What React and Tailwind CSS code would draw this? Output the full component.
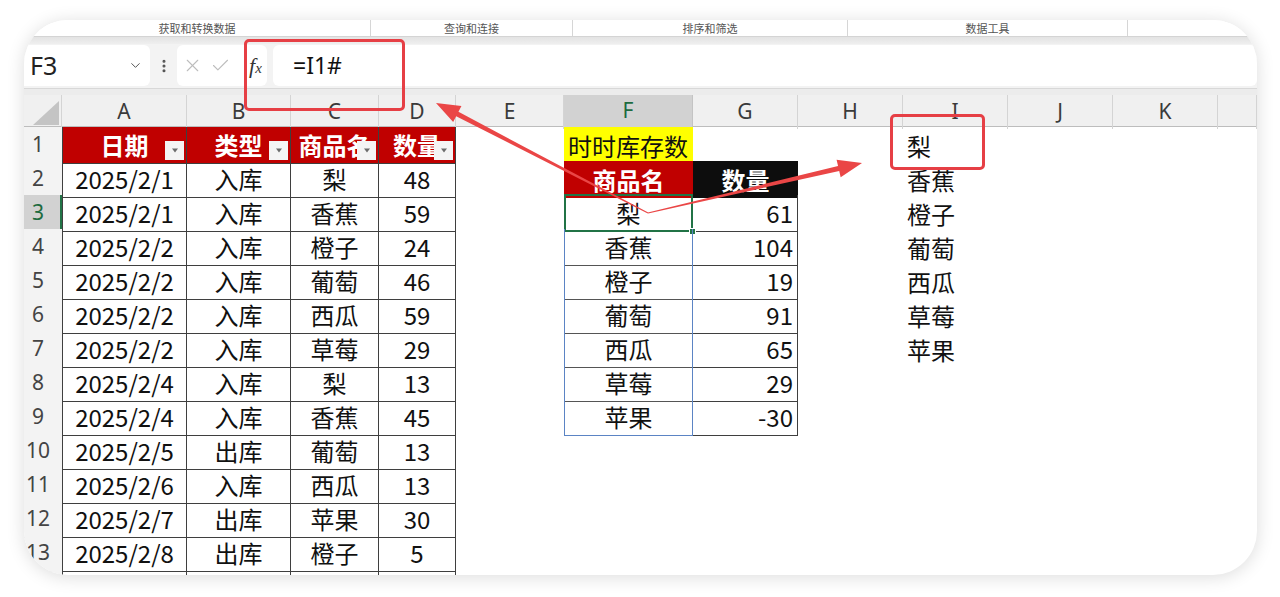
import { ChevronDown, EllipsisVertical, X, Check } from "lucide-react";

const cols = ["A", "B", "C", "D", "E", "F", "G", "H", "I", "J", "K", ""];

const gridCols =
  "grid grid-cols-[38px_125px_104px_88px_77px_108px_129px_105px_105px_105px_105px_105px_1fr]";

const head = ["日期", "类型", "商品名", "数量"];

const records = [
  ["2025/2/1", "入库", "梨", "48"],
  ["2025/2/1", "入库", "香蕉", "59"],
  ["2025/2/2", "入库", "橙子", "24"],
  ["2025/2/2", "入库", "葡萄", "46"],
  ["2025/2/2", "入库", "西瓜", "59"],
  ["2025/2/2", "入库", "草莓", "29"],
  ["2025/2/4", "入库", "梨", "13"],
  ["2025/2/4", "入库", "香蕉", "45"],
  ["2025/2/5", "出库", "葡萄", "13"],
  ["2025/2/6", "入库", "西瓜", "13"],
  ["2025/2/7", "出库", "苹果", "30"],
  ["2025/2/8", "出库", "橙子", "5"],
  ["", "", "", ""],
];

const stock = [
  ["梨", "61"],
  ["香蕉", "104"],
  ["橙子", "19"],
  ["葡萄", "91"],
  ["西瓜", "65"],
  ["草莓", "29"],
  ["苹果", "-30"],
];

const fruits = ["梨", "香蕉", "橙子", "葡萄", "西瓜", "草莓", "苹果"];

const ribbon = [
  { label: "获取和转换数据", w: "w-[347px]" },
  { label: "查询和连接", w: "w-[202px]" },
  { label: "排序和筛选", w: "w-[275px]" },
  { label: "数据工具", w: "w-[280px]" },
];

function FilterBtn() {
  return (
    <span className="absolute right-[2px] bottom-[3px] w-[19px] h-[19px] bg-[#f4f4f4] flex items-center justify-center">
      <svg width="8" height="5" viewBox="0 0 8 5">
        <polygon points="1,0.5 7,0.5 4,4.5" fill="#6b6b6b" />
      </svg>
    </span>
  );
}

function RowHead({ r }) {
  if (r === 3)
    return (
      <div className="flex items-center justify-center pr-[8px] bg-[#d2d2d2] text-[#1d6b3f] border-b border-b-[#c8c8c8] border-r-2 border-r-[#217346]">
        {r}
      </div>
    );
  // the last row only peeks out under the card edge, its number is hidden
  return (
    <div className="flex items-center justify-center pr-[10px] bg-[#f3f3f3] text-[#444] border-b border-b-[#dcdcdc]">
      {r < 14 ? r : ""}
    </div>
  );
}

function TableCells({ r }) {
  if (r === 1)
    return head.map((t, i) => (
      <div
        key={i}
        className={`relative flex items-center justify-center bg-[#c00000] text-white font-bold border-r border-b border-r-[#3f3f3f] border-b-[#3f3f3f] ${
          i === 0 ? "border-l border-l-[#3f3f3f]" : ""
        }`}
      >
        {t}
        <FilterBtn />
      </div>
    ));
  return records[r - 2].map((t, i) => (
    <div
      key={i}
      className={`flex items-center justify-center text-[#111] border-r border-b border-r-[#3f3f3f] border-b-[#3f3f3f] ${
        i === 0 ? "border-l border-l-[#3f3f3f]" : ""
      }`}
    >
      {t}
    </div>
  ));
}

function StockCells({ r }) {
  if (r === 1)
    return (
      <>
        <div className="flex items-center pl-[4px] bg-[#ffff00] text-[#111] whitespace-nowrap">时时库存数</div>
        <div />
      </>
    );
  if (r === 2)
    return (
      <>
        <div className="flex items-center justify-center bg-[#c00000] text-white font-bold">商品名</div>
        <div className="flex items-center justify-center bg-[#0d0d0d] text-white font-bold">数量</div>
      </>
    );
  if (r > 9)
    return (
      <>
        <div />
        <div />
      </>
    );
  const [name, qty] = stock[r - 3];
  return (
    <>
      <div
        className={`relative flex items-center justify-center text-[#111] border-l border-r border-b border-l-[#5b84c4] border-r-[#5b84c4] ${
          r === 9 ? "border-b-[#5b84c4]" : "border-b-[#555]"
        }`}
      >
        {name}
        {r === 3 && (
          <>
            <span className="absolute -left-[1px] -right-[1px] -top-[1px] -bottom-[1px] border-2 border-[#217346]" />
            <span className="absolute -right-[4px] -bottom-[4px] w-[7px] h-[7px] bg-[#217346] border border-white" />
          </>
        )}
      </div>
      <div className="flex items-center justify-end pr-[4px] text-[#111] border-r border-b border-r-[#3f3f3f] border-b-[#3f3f3f]">
        {qty}
      </div>
    </>
  );
}

function SheetRow({ r }) {
  return (
    <div className={`${gridCols} shrink-0 h-[34px] text-[24px] font-['Noto_Sans_CJK_SC',sans-serif]`}>
      <div className="contents font-['Noto_Sans',sans-serif] text-[21px]">
        <RowHead r={r} />
      </div>
      <TableCells r={r} />
      <div />
      <StockCells r={r} />
      <div />
      <div className="flex items-center pl-[4px] text-[#111]">{fruits[r - 1] || ""}</div>
      <div />
      <div />
      <div />
    </div>
  );
}

export default function App() {
  const rows = Array.from({ length: 14 }, (_, i) => i + 1);
  return (
    <div className="relative w-[1280px] h-[597px] bg-white overflow-hidden pl-[24px] pt-[20px]">
      <div className="w-[1233px] h-[555px] rounded-[44px] overflow-hidden bg-white shadow-[0_2px_18px_rgba(0,0,0,0.14)] flex flex-col">
        {/* ribbon group labels */}
        <div className="shrink-0 h-[16px] flex bg-white font-['Noto_Sans_CJK_SC',sans-serif] text-[#555]">
          {ribbon.map((g) => (
            <div key={g.label} className={`${g.w} h-full flex items-center justify-center border-r border-r-[#d6d6d6]`}>
              <span className="text-[11px] leading-[16px]">{g.label}</span>
            </div>
          ))}
          <div className="flex-1" />
        </div>
        <div className="shrink-0 h-[8px] border-t border-t-[#d4d4d4] bg-linear-to-b from-[#e3e3e3] to-[#efefef]" />

        {/* formula bar */}
        <div className="shrink-0 h-[44px] bg-[#f3f3f3] flex items-start pt-[1px] font-['Noto_Sans',sans-serif]">
          <div className="w-[126px] h-[41px] bg-white rounded-r-[6px] flex items-center justify-between pl-[6px] pr-[7px]">
            <span className="text-[25px] text-[#222]">F3</span>
            <ChevronDown size={15} strokeWidth={1.6} className="text-[#555]" />
          </div>
          <div className="w-[27px] h-[41px] flex items-center justify-center">
            <EllipsisVertical size={16} strokeWidth={2.6} className="text-[#555]" />
          </div>
          <div className="w-[90px] h-[41px] bg-white rounded-[6px] flex items-center pl-[5px] gap-[7px]">
            <X size={21} strokeWidth={1.3} className="text-[#bdbdbd]" />
            <Check size={21} strokeWidth={1.3} className="text-[#bdbdbd]" />
            <span className="ml-[11px] font-['Liberation_Serif',serif] italic text-[#333] text-[22px] leading-none">
              f<span className="text-[15px]">x</span>
            </span>
          </div>
          <div className="flex-1 h-[41px] bg-white rounded-[6px] ml-[6px] flex items-center pl-[20px]">
            <span className="text-[23px] text-[#111]">=I1#</span>
          </div>
        </div>
        <div className="shrink-0 h-[7px] border-t border-t-[#d8d8d8] bg-[#ececec]" />

        {/* column headers */}
        <div className={`${gridCols} shrink-0 h-[32px] bg-[#f0f0f0] border-b border-b-[#bdbdbd] font-['Noto_Sans',sans-serif] text-[21px]`}>
          <div className="flex items-end justify-end pr-[2px] pb-[4px] border-r border-r-[#d4d4d4]">
            <svg width="26" height="24" viewBox="0 0 26 24">
              <polygon points="26,0 26,24 0,24" fill="#c4c4c4" />
            </svg>
          </div>
          {cols.map((c, i) =>
            c === "F" ? (
              <div key={i} className="flex items-center justify-center bg-[#d2d2d2] text-[#1d6b3f] border-b-2 border-b-[#217346] border-r border-r-[#c4c4c4]">
                {c}
              </div>
            ) : (
              <div key={i} className="flex items-center justify-center text-[#3a3a3a] border-r border-r-[#d4d4d4]">
                {c}
              </div>
            )
          )}
        </div>

        {rows.map((r) => (
          <SheetRow key={r} r={r} />
        ))}
      </div>

      {/* annotations */}
      <div className="absolute left-[244px] top-[39px] w-[161px] h-[72px] border-[3px] border-[#e63f45] rounded-[5px]" />
      <div className="absolute left-[890px] top-[114px] w-[95px] h-[56px] border-[3px] border-[#e63f45] rounded-[5px]" />
      <svg className="absolute left-0 top-0 pointer-events-none" width="1280" height="597" viewBox="0 0 1280 597">
        <polygon
          points="648.23,212.56 458.45,111.83 461.45,106.06 436,103 453.15,122.04 456.15,116.27 647.77,213.44"
          fill="#ea4646"
        />
        <polygon
          points="648.11,213.49 839.2,170.89 840.68,177.22 862,163 836.58,159.7 838.06,166.03 647.89,212.51"
          fill="#ea4646"
        />
      </svg>
    </div>
  );
}
